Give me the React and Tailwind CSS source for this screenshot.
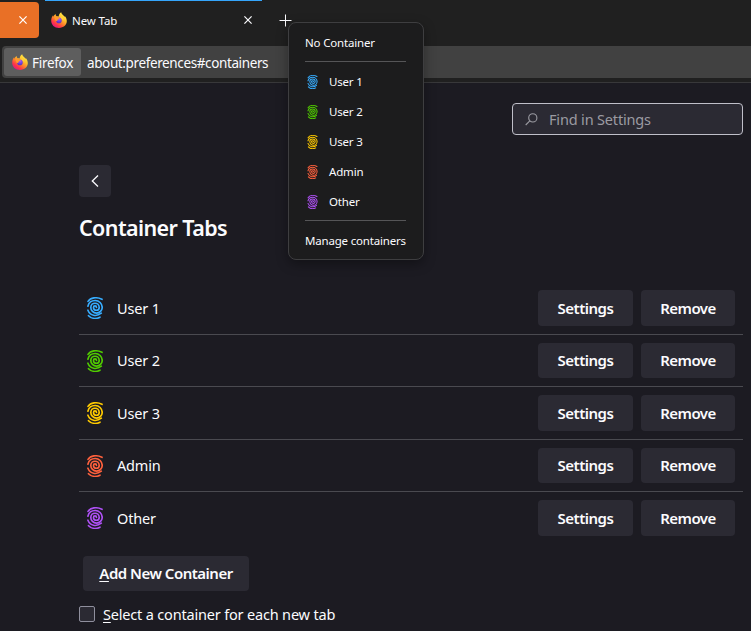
import React from "react";

const containers = [
  { name: "User 1", color: "text-[#37adff]", row: "h-[53px] border-b", btn: "h-9", label: "pt-px" },
  { name: "User 2", color: "text-[#51cd00]", row: "h-[52px] border-b", btn: "h-[35px]", label: "" },
  { name: "User 3", color: "text-[#ffcb00]", row: "h-[53px] border-b", btn: "h-9", label: "pt-px" },
  { name: "Admin", color: "text-[#ff613d]", row: "h-[52px] border-b", btn: "h-[35px]", label: "" },
  { name: "Other", color: "text-[#af51f5]", row: "h-[53px]", btn: "h-9", label: "pt-px" },
];

function Fingerprint({ className }) {
  return (
    <svg viewBox="0 0 16 22" className={className} fill="none" stroke="currentColor" strokeWidth="1.65" strokeLinecap="round">
      <path d="M1 4.400C3.600.4 9.600-.2 15 2.300" />
      <path d="M.9 9.200C1.800 5.600 4.700 3.500 8.200 3.500A7 7 0 0 1 15.200 10.400A5.700 5.700 0 0 1 3.800 10.400A4.200 4.200 0 0 1 12.200 10.400A2.850 2.850 0 0 1 6.500 10.400A1.500 1.500 0 0 1 9.500 10.400" />
      <path d="M.9 13.200C3.200 18.800 9.200 20.200 14.300 16.200" />
      <path d="M1.500 18.700C4.400 21.800 9.200 22 13 20.200" />
    </svg>
  );
}

function FirefoxLogo({ id }) {
  return (
    <svg viewBox="0 0 16 16" className="size-4 shrink-0">
      <defs>
        <linearGradient id={id + "-body"} x1="0.85" y1="0.05" x2="0.2" y2="0.95">
          <stop offset="0" stopColor="#fff44f" />
          <stop offset="0.35" stopColor="#ffc02b" />
          <stop offset="0.6" stopColor="#ff7a2c" />
          <stop offset="0.8" stopColor="#ff3647" />
          <stop offset="1" stopColor="#e31587" />
        </linearGradient>
        <radialGradient id={id + "-globe"} cx="0.55" cy="0.25" r="0.8">
          <stop offset="0" stopColor="#b060f0" />
          <stop offset="0.5" stopColor="#7542e5" />
          <stop offset="1" stopColor="#4a2fb8" />
        </radialGradient>
      </defs>
      <path fill={"url(#" + id + "-body)"} d="M10.200.2c.2 1.500 1.200 2.200 2.300 3.200.5.500.9 1 1.200 1.500V3.900c1.300 1.300 2.100 3.200 2.100 5.100 0 3.900-3.400 6.900-7.800 6.900-4.500 0-7.800-3.100-7.800-7.200 0-2.100.6-3.900 1.900-5.400 0 .6.100 1 .3 1.400C2.900 3.500 3.900 2.500 4.700 2c-.1.900.2 1.700.8 2.200.8-.1 1.600 0 2.200.2C7.800 2.600 8.700 1 10.200.2Z" />
      <circle cx="7.900" cy="8.400" r="2.800" fill={"url(#" + id + "-globe)"} />
      <path fill="#ff9a2b" d="M3.300 5.100c1.300-.9 2.700-.7 3.700.2.500.4 1.300.4 1.800.5-.2.900-1.200 1.200-1.900 1.700-.5.400-.2 1.400-.9 1.600-.7.200-1.200-.3-1.700-.8Z" />
      <path fill="#ffd23d" d="M9.200 4.400c2.400.3 3.600 2.300 3.100 4.700-.2-1.300-.9-2.300-2-2.700Z" />
    </svg>
  );
}

function CloseIcon({ className }) {
  return (
    <svg viewBox="0 0 8 8" className={className} fill="none" stroke="currentColor" strokeWidth="1.200">
      <path d="M.4.4l7.200 7.200M7.600.4L.4 7.600" />
    </svg>
  );
}

const button = "flex items-center justify-center rounded-[4px] bg-[#2b2a33] text-[15px] font-semibold ";

function Toolbar() {
  return (
    <header className="h-[83px] border-b border-[#38383a] bg-[#202020]">
      <div className="flex h-[46px]">
        <div className="mt-[2px] flex h-9 w-[39px] items-center rounded-r-[4px] bg-[#e97026] pl-[19px] text-white">
          <CloseIcon className="size-2" />
        </div>
        <div className="ml-[6px] flex h-[39px] w-[217px] items-center border-t border-[#35a5fb] pl-[6px] pr-[10px]">
          <FirefoxLogo id="tab" />
          <span className="ml-[5px] pt-px text-[11.5px] tracking-[-0.1px]">New Tab</span>
          <CloseIcon className="ml-auto size-2" />
        </div>
        <svg viewBox="0 0 13 13" className="ml-[17px] mt-[14px] size-[13px]" stroke="currentColor" strokeWidth="1">
          <path d="M6.500.5v12M.5 6.500h12" />
        </svg>
      </div>
      <div className="ml-[2px] flex h-8 items-center rounded-l-[4px] bg-[#414141] pl-[2px]">
        <div className="flex h-7 w-[77px] items-center rounded-[3px] bg-[#5e5e5e] pl-2">
          <FirefoxLogo id="identity" />
          <span className="ml-1 pt-[2px] text-[13.5px] tracking-[-0.3px]">Firefox</span>
        </div>
        <span className="ml-[6px] pt-[2px] text-[13.5px] tracking-[-0.38px]">about:preferences#containers</span>
      </div>
    </header>
  );
}

function ContainerMenu() {
  return (
    <div className="absolute left-[288px] top-[22px] h-[238px] w-[136px] rounded-lg border border-[#3e3e40] bg-[#1c1c1d] pl-4 pr-[17px] pt-[5px] text-[11.5px] tracking-[-0.18px] shadow-[0_4px_12px_rgba(0,0,0,0.35)]">
      <div className="flex h-[30px] items-center whitespace-nowrap">No Container</div>
      <div className="mb-[5px] mt-[3px] h-px bg-[#555557]" />
      {containers.map((c) => (
        <div key={c.name} className="flex h-[30px] items-center">
          <Fingerprint className={"ml-[2px] mr-[11px] h-[14px] w-[11px] " + c.color} />
          <span className="whitespace-nowrap">{c.name}</span>
        </div>
      ))}
      <div className="mb-[5px] mt-[3px] h-px bg-[#555557]" />
      <div className="flex h-[30px] items-center whitespace-nowrap">Manage containers</div>
    </div>
  );
}

export default function App() {
  return (
    <div className="relative h-[631px] w-[751px] overflow-hidden bg-[#1c1b22] font-['Noto_Sans','Open_Sans',sans-serif] text-[#fbfbfe]">
      <Toolbar />
      <main className="pl-[79px] pr-2 pt-5">
        <div className="ml-auto flex h-8 w-[231px] items-center rounded-[4px] border border-[#bfbfc9] bg-[#2b2a33] pl-3 text-[#9b9ba2]">
          <svg viewBox="0 0 13 13" className="size-[13px]" fill="none" stroke="currentColor" strokeWidth="1.100">
            <circle cx="7.800" cy="4.900" r="4.100" />
            <path d="M4.800 7.900L.7 12" />
          </svg>
          <span className="ml-[11px] pt-[2px] text-[14.5px] tracking-[-0.17px]">Find in Settings</span>
        </div>
        <button className="mt-[30px] flex size-8 items-center justify-center rounded-[4px] bg-[#2b2a33]">
          <svg viewBox="0 0 8 12" className="h-3 w-2" fill="none" stroke="currentColor" strokeWidth="1.300">
            <path d="M7 .5L1.300 6 7 11.500" />
          </svg>
        </button>
        <h1 className="mt-[15px] h-8 text-[21.5px] font-semibold leading-8 tracking-[-0.6px]">Container Tabs</h1>
        <ul className="mt-[38px]">
          {containers.map((c) => (
            <li key={c.name} className={"flex border-[#4a4a50] pr-2 pt-2 " + c.row}>
              <div className={"flex flex-1 items-center pl-2 " + c.btn}>
                <Fingerprint className={"mr-[14px] h-[22px] w-4 " + c.color} />
                <span className={"text-[14.5px] tracking-[-0.17px] " + c.label}>{c.name}</span>
              </div>
              <button className={button + "mr-2 w-[95px] tracking-[-0.5px] " + c.btn}>Settings</button>
              <button className={button + "w-[94px] tracking-[-0.55px] " + c.btn}>Remove</button>
            </li>
          ))}
        </ul>
        <button className={button + "ml-1 mt-[11px] h-[35px] w-[166px] whitespace-pre tracking-[-0.5px]"}>
          <span><span className="underline underline-offset-2">A</span>dd New Container</span>
        </button>
        <label className="mt-[13px] flex h-5 items-center">
          <span className="size-4 rounded-[2px] border border-[#8f8f9d] bg-[#2b2a33]" />
          <span className="ml-2 pt-[2px] text-[14.5px] tracking-[-0.18px]"><span className="underline underline-offset-2">S</span>elect a container for each new tab</span>
        </label>
      </main>
      <ContainerMenu />
    </div>
  );
}
